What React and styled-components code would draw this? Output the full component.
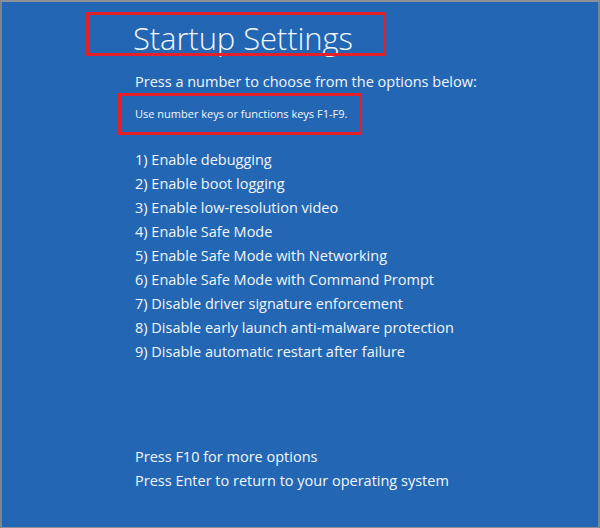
import React from "react";
import styled, {createGlobalStyle} from "styled-components";

const GlobalStyle = createGlobalStyle`
  html, body {
    margin: 0;
    padding: 0;
    background: #8c9199;
  }
`;

const Screen = styled.div`
  position: relative;
  box-sizing: border-box;
  width: 600px;
  height: 528px;
  background: #2367b4;
  border-top: 2px solid #8c9199;
  border-left: 2px solid #7d8590;
  border-right: 2px solid #7d8590;
  border-bottom: 1px solid #8c9199;
  padding: 18px 0 0 131px;
  color: #f2f6fb;
  font-family: "Open Sans", "Noto Sans", sans-serif;
  display: flex;
  flex-direction: column;
`;

const Title = styled.h1`
  margin: 0;
  font-weight: 300;
  font-size: 31px;
  line-height: 36px;
  letter-spacing: -0.1px;
`;

const Line = styled.div`
  font-size: ${props => props.small ? 11 : 14.5}px;
  line-height: ${props => props.small ? 16 : 24}px;
  margin-top: ${props => props.mt || 0}px;
  margin-left: 2px;
  white-space: nowrap;
`;

const OptionList = styled.ol`
  list-style: none;
  margin: 26px 0 0 2px;
  padding: 0;
`;

const Option = styled.li`
  font-size: 14.5px;
  line-height: 24px;
  white-space: nowrap;
`;

const Footer = styled.div`
  margin-top: auto;
  padding-bottom: 34px;
`;

const Mark = styled.div`
  position: absolute;
  box-sizing: border-box;
  border: 3px solid #e5202a;
  left: ${props => props.x}px;
  top: ${props => props.y}px;
  width: ${props => props.w}px;
  height: ${props => props.h}px;
`;

const options = [
    "Enable debugging",
    "Enable boot logging",
    "Enable low-resolution video",
    "Enable Safe Mode",
    "Enable Safe Mode with Networking",
    "Enable Safe Mode with Command Prompt",
    "Disable driver signature enforcement",
    "Disable early launch anti-malware protection",
    "Disable automatic restart after failure",
];

const App = () => {
    return (
        <>
            <GlobalStyle/>
            <Screen>
                <Title>Startup Settings</Title>
                <Line mt={14}>Press a number to choose from the options below:</Line>
                <Line small mt={12}>Use number keys or functions keys F1-F9.</Line>
                <OptionList>
                    {options.map((text, i) => (
                        <Option key={i}>{i + 1}) {text}</Option>
                    ))}
                </OptionList>
                <Footer>
                    <Line>Press F10 for more options</Line>
                    <Line>Press Enter to return to your operating system</Line>
                </Footer>
                <Mark x={84} y={10} w={300} h={44}/>
                <Mark x={116} y={91} w={244} h={42}/>
            </Screen>
        </>
    );
};

export default App;
